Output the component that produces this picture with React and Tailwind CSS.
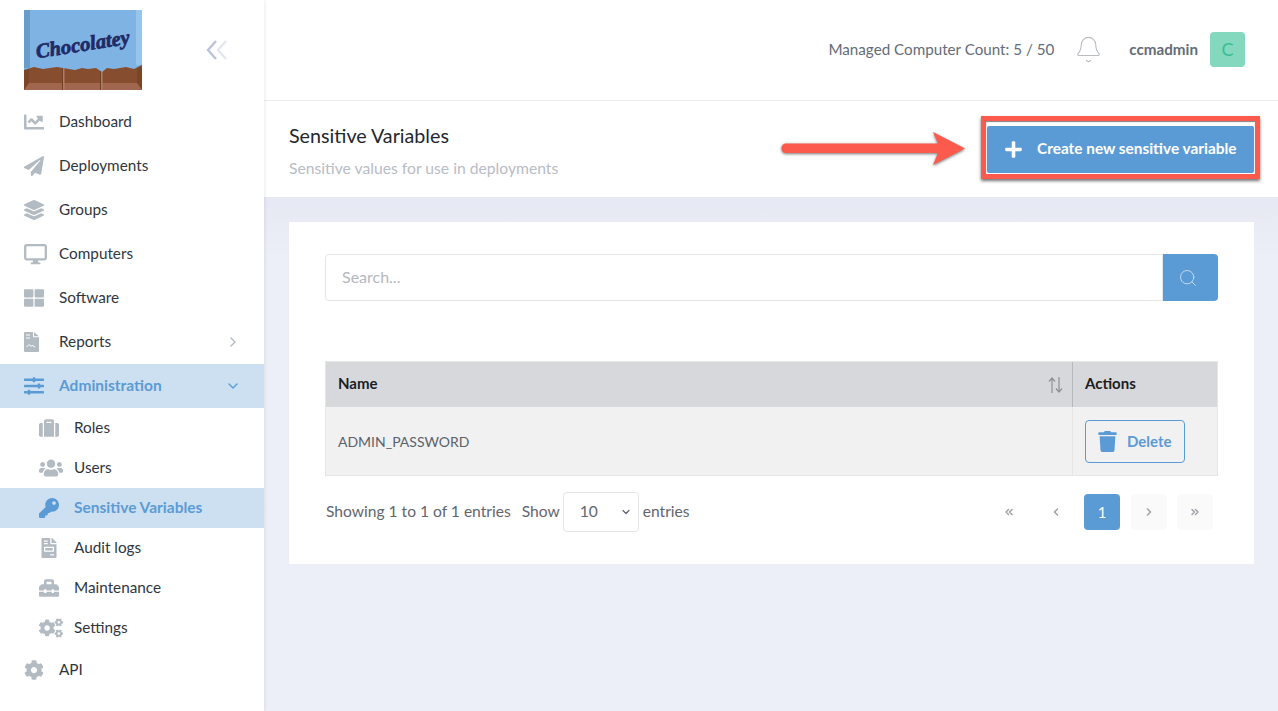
import { Bell, Search, ChevronRight, ChevronDown, ChevronsLeft, ChevronsRight, ChevronLeft } from 'lucide-react';
import {
  FaChartLine, FaPaperPlane, FaLayerGroup, FaThLarge, FaSlidersH, FaSuitcase, FaUsers, FaKey,
  FaFileInvoice, FaToolbox, FaCogs, FaCog, FaTrash, FaPlus,
} from 'react-icons/fa';

const font = { fontFamily: 'Lato, "Noto Sans", sans-serif' };

const Monitor = ({ className }) => (
  <svg viewBox="0 0 24 22" className={className} fill="none">
    <rect x="1.2" y="1.2" width="21.6" height="14.8" rx="1.8" stroke="currentColor" strokeWidth="2.4" />
    <path d="M9.5 16.5h5l.6 3h2v1.8H7v-1.8h2z" fill="currentColor" />
  </svg>
);

const ReportFile = ({ className }) => (
  <svg viewBox="0 0 15 20" className={className}>
    <path d="M1 0h8v5.2h6V19a1 1 0 0 1-1 1H1a1 1 0 0 1-1-1V1a1 1 0 0 1 1-1z" fill="currentColor" />
    <path d="M10 0l5 4.2h-5z" fill="currentColor" />
    <path d="M2 3h4M2 6h4" stroke="#fff" strokeWidth="1" />
    <path d="M2.500 15l2.500-2.500 2 1.800 1.500-.8 2.500 1.500" stroke="#fff" strokeWidth="1" fill="none" />
  </svg>
);

const SortArrows = () => (
  <svg viewBox="0 0 15 16" className="ml-auto -translate-x-px w-[15px] h-4 text-[#8d9096]" fill="none" stroke="currentColor" strokeWidth="1.2">
    <path d="M4 16V1M1 4.500L4 1l3 3.500" />
    <path d="M11 0v15M8 11.500l3 3.500 3-3.500" />
  </svg>
);

const Item = ({ icon: Icon, label, sub, active, chevron, iconClass = 'w-5 h-5' }) => (
  <div className={`flex items-center ${sub ? 'h-10 pl-[39px]' : 'h-11 pl-6'} pr-[23px] ${active ? 'bg-[#cde0f2] text-[#5b9bd5] font-bold' : 'text-[#2f3640]'}`}>
    <span className={`flex items-center w-5 h-5 shrink-0 ${active ? 'text-[#5b9bd5]' : 'text-[#b2bac2]'}`}>
      <Icon className={iconClass} />
    </span>
    <span className={`ml-[15px] ${active ? 'text-[15.5px]' : 'text-[15.3px] pb-[2px]'}`}>{label}</span>
    {chevron === 'right' && <ChevronRight className="ml-auto w-4 h-4 text-[#b2bac2]" />}
    {chevron === 'down' && <ChevronDown className="ml-auto w-4 h-4 text-[#5b9bd5]" />}
  </div>
);

const Sidebar = () => (
  <aside className="w-[264px] shrink-0 bg-white shadow-[1px_0_3px_rgba(60,70,110,0.1)] z-10">
    <div className="h-[100px] pl-6 pt-2.5 flex items-start">
      <svg viewBox="0 0 118 80" className="w-[118px] h-20 block">
        <rect width="118" height="80" fill="#a0674e" />
        <path d="M5 55h108v18H5z" fill="#864d2e" />
        <path d="M0 55l5 0v18l-5 7zM118 55l-5 0v18l5 7z" fill="#7a4629" />
        <path d="M38 55h1v25h-1zM76 55h1v25h-1z" fill="#6f3f24" />
        <path d="M39 55h1.500v25H39zM77 55h1.500v25H77z" fill="#b07f68" />
        <path d="M0 0h118v55l-8 4-8-2-12 2-7-1-5 4-6-4-8 1-6-1-7 2-6-1-12-2-14 2-9-2-10 3L0 55z" fill="#7fb3e3" />
        <rect width="6" height="58" fill="#6a9cc9" />
        <rect x="112" width="6" height="55" fill="#96c4ec" />
        <text x="59" y="41" textAnchor="middle" transform="rotate(-9 59 36)" fontFamily="'Liberation Serif', serif" fontStyle="italic" fontWeight="700" fontSize="20.5" stroke="#1f2a66" strokeWidth="0.7" fill="#1f2a66">Chocolatey</text>
      </svg>
      <svg viewBox="0 0 22 20" className="w-[22px] h-5 ml-[64px] mt-[30px]" fill="none" strokeWidth="2.400">
        <path d="M10 1L2 10l8 9" stroke="#bcc2da" />
        <path d="M20 1l-8 9 8 9" stroke="#e3e6ef" />
      </svg>
    </div>
    <Item icon={FaChartLine} label="Dashboard" />
    <Item icon={FaPaperPlane} label="Deployments" />
    <Item icon={FaLayerGroup} label="Groups" />
    <Item icon={Monitor} label="Computers" iconClass="w-[23px] h-[21px] shrink-0" />
    <Item icon={FaThLarge} label="Software" />
    <Item icon={ReportFile} label="Reports" chevron="right" iconClass="w-[15px] h-5" />
    <Item icon={FaSlidersH} label="Administration" active chevron="down" />
    <Item icon={FaSuitcase} label="Roles" sub />
    <Item icon={FaUsers} label="Users" sub iconClass="w-6 h-5 shrink-0" />
    <Item icon={FaKey} label="Sensitive Variables" sub active />
    <Item icon={FaFileInvoice} label="Audit logs" sub />
    <Item icon={FaToolbox} label="Maintenance" sub />
    <Item icon={FaCogs} label="Settings" sub iconClass="w-6 h-5 shrink-0" />
    <Item icon={FaCog} label="API" />
  </aside>
);

const Header = () => (
  <header className="h-[101px] shrink-0 bg-white border-b border-[#e8ebf0] flex items-center justify-end pr-[33px] pb-0.5">
    <span className="text-[15.2px] text-[#646c78]">Managed Computer Count: 5 / 50</span>
    <Bell className="w-[29px] h-[29px] ml-5 text-[#b9bdc2]" strokeWidth={0.9} />
    <span className="text-[15.2px] font-bold text-[#646c78] ml-[26px]">ccmadmin</span>
    <span className="w-[35px] h-[35px] ml-3 rounded bg-[#83d8bd] text-[#3bbd94] flex items-center justify-center text-[18px]">C</span>
  </header>
);

const PageTitle = () => (
  <div className="h-[96px] shrink-0 bg-white flex items-center justify-between pl-[25px] pr-6 relative">
    <div className="pt-[4px]">
      <h1 className="text-[19.7px] text-[#22272e] leading-6">Sensitive Variables</h1>
      <p className="text-[15.7px] text-[#b8bcc4] mt-[10px] leading-5">Sensitive values for use in deployments</p>
    </div>
    <button className="w-[267px] h-[47px] bg-[#5b9bd5] rounded-[2px] text-white font-bold text-[15.4px] flex items-center pl-[17px]">
      <FaPlus className="w-[19px] h-[19px]" />
      <span className="ml-[14px] pb-px">Create new sensitive variable</span>
    </button>
    {/* callout drawn on top of the screenshot */}
    <div className="absolute left-[717px] top-[15px] w-[279px] h-[63px] border-[5px] border-[#fb5a4c] shadow-[0_2px_3px_rgba(0,0,0,0.55),inset_0_1px_1px_rgba(0,0,0,0.5)] pointer-events-none" />
    <svg viewBox="0 0 186 40" className="absolute left-[517px] top-[27px] w-[186px] h-10 overflow-visible drop-shadow-[0_1.5px_1.5px_rgba(0,0,0,0.55)]">
      <path d="M4 15.500h153L152 4l32 16.500-32 16.500 5-12H4a5 5 0 0 1 0-9.500z" fill="#fb5a4c" />
    </svg>
  </div>
);

const PageButton = ({ children, active, box }) => (
  <span className={`w-9 h-9 rounded flex items-center justify-center ${active ? 'bg-[#5b9bd5] text-white text-[15px]' : box ? 'bg-[#fafafa] text-[#9ea2a8]' : 'text-[#9ea2a8]'}`}>
    {children}
  </span>
);

const Card = () => (
  <section className="bg-white h-[342px] pt-8 px-9">
    <div className="flex h-[47px]">
      <div className="flex-1 border border-[#e4e6ea] rounded-l flex items-center pl-4 pb-[2px] text-[16px] text-[#b4b8bf]">Search...</div>
      <div className="w-[55px] bg-[#5b9bd5] rounded-r flex items-center justify-center pr-[5px]">
        <Search className="w-5 h-5 text-[#c3daf0]" strokeWidth={1.2} />
      </div>
    </div>
    <div className="mt-[60px] border border-[#e6e6e8]">
      <div className="flex h-[45px] bg-[#d7d8dc] text-[15px] font-bold text-[#1a1d22]">
        <div className="flex-1 flex items-center pl-3 pr-2 border-r border-[#b7b8bc]">
          <span className="pb-[2px]">Name</span>
          <SortArrows />
        </div>
        <div className="w-[144px] flex items-center pl-3 pb-[2px]">Actions</div>
      </div>
      <div className="flex h-[68px] bg-[#f1f1f2] text-[#5a616b]">
        <div className="flex-1 flex items-center pl-3 border-r border-[#e6e6e8] text-[14px]">ADMIN_PASSWORD</div>
        <div className="w-[144px] flex items-center pl-3">
          <button className="w-[100px] h-[43px] border border-[#5b9bd5] rounded text-[#5b9bd5] font-bold flex items-center pl-3 text-[15px]">
            <FaTrash className="w-[19px] h-[21px]" />
            <span className="ml-[10px]">Delete</span>
          </button>
        </div>
      </div>
    </div>
    <div className="flex items-center mt-[16px] text-[15.6px] text-[#5f6670]">
      <span className="ml-px">Showing 1 to 1 of 1 entries</span>
      <span className="ml-[11px]">Show</span>
      <span className="w-[76px] h-10 ml-[3px] border border-[#e3e5e9] rounded flex items-center pl-4 relative">
        10
        <ChevronDown className="absolute right-[6px] w-3 h-3" strokeWidth={2.5} />
      </span>
      <span className="ml-[4px]">entries</span>
      <div className="ml-auto mr-[5px] flex items-center gap-[10.5px]">
        <PageButton><ChevronsLeft className="w-3 h-3" strokeWidth={3} /></PageButton>
        <PageButton><ChevronLeft className="w-3 h-3" strokeWidth={3} /></PageButton>
        <PageButton active>1</PageButton>
        <PageButton box><ChevronRight className="w-3 h-3" strokeWidth={3} /></PageButton>
        <PageButton box><ChevronsRight className="w-3 h-3" strokeWidth={3} /></PageButton>
      </div>
    </div>
  </section>
);

export default function App() {
  return (
    <div className="flex h-screen overflow-hidden bg-white" style={font}>
      <Sidebar />
      <main className="flex-1 flex flex-col min-w-0">
        <Header />
        <PageTitle />
        <div className="flex-1 bg-gradient-to-b from-[#e6e8f3] to-[#eceff7] to-[12%] pt-[25px] pl-[25px] pr-6">
          <Card />
        </div>
      </main>
    </div>
  );
}
